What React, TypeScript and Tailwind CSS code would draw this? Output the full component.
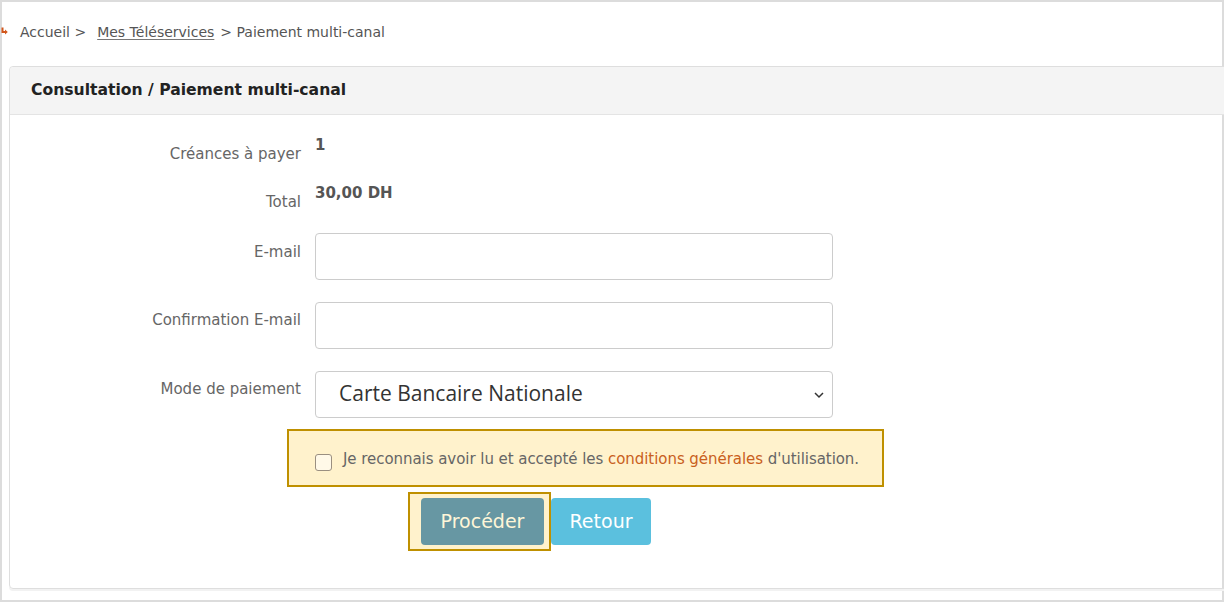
import React from "react";

const font = { fontFamily: '"DejaVu Sans", sans-serif' };

export default function App() {
  return (
    <div className="w-[1224px] h-[602px] overflow-hidden bg-white" style={font}>
      <div className="w-full h-full border-2 border-[#dcdcdc] flex flex-col">
        <div className="h-[64px] flex items-center pb-[3px] text-[14px] text-[#555]">
          <svg width="7" height="8" viewBox="0 0 7 8" className="-ml-[1px] mr-[12px] -mt-[4px]">
            <path d="M0.5 0.5 L2.5 0.5 L2.5 4 L4 4 L4 2.5 L6.8 5 L4 7.5 L4 6 L0.5 6 Z" fill="#d2571c" />
          </svg>
          <span>Accueil &gt;</span>
          <span className="ml-[11px] underline decoration-[#777] underline-offset-[2px]">Mes Téléservices</span>
          <span className="ml-[6px]">&gt; Paiement multi-canal</span>
        </div>
        <div className="ml-[7px] -mr-[6px] h-[523px] border border-[#dedede] rounded-[4px] shadow-[0_2px_0_#f2f2f2] flex flex-col">
          <div className="h-[48px] bg-[#f4f4f4] border-b border-[#e4e4e4] flex items-center pl-[21px] pt-[1px] text-[15.6px] font-bold text-[#222] rounded-t-[4px]">
            Consultation / Paiement multi-canal
          </div>
          <div className="flex flex-col pt-[22px]">
            <div className="flex h-[48px]">
              <div className="w-[291px] text-right pt-[7px] text-[15px] leading-[20px] text-[#666]">Créances à payer</div>
              <div className="ml-[14px] text-[15px] leading-[16px] font-bold text-[#555]">1</div>
            </div>
            <div className="flex h-[48px]">
              <div className="w-[291px] text-right pt-[7px] text-[15px] leading-[20px] text-[#666]">Total</div>
              <div className="ml-[14px] text-[15px] leading-[16px] font-bold text-[#555]">30,00 DH</div>
            </div>
            <div className="flex h-[69px]">
              <div className="w-[291px] text-right pt-[9px] text-[15px] leading-[20px] text-[#666]">E-mail</div>
              <div className="ml-[14px] w-[518px] h-[47px] border border-[#ccc] rounded-[4px] bg-white"></div>
            </div>
            <div className="flex h-[69px]">
              <div className="w-[291px] text-right pt-[8px] text-[15px] leading-[20px] text-[#666]">Confirmation E-mail</div>
              <div className="ml-[14px] w-[518px] h-[47px] border border-[#ccc] rounded-[4px] bg-white"></div>
            </div>
            <div className="flex h-[58px]">
              <div className="w-[291px] text-right pt-[8px] text-[15px] leading-[20px] text-[#666]">Mode de paiement</div>
              <div className="ml-[14px] w-[518px] h-[47px] border border-[#ccc] rounded-[4px] bg-white flex items-center justify-between pl-[23px] pr-[6px]">
                <span className="text-[21px] text-[#333] -mt-[1px]" style={{ fontFamily: '"Open Sans", sans-serif' }}>Carte Bancaire Nationale</span>
                <svg width="14" height="14" viewBox="0 0 14 14">
                  <path d="M3 5 L7 9 L11 5" fill="none" stroke="#333" strokeWidth="1.5" />
                </svg>
              </div>
            </div>
            <div className="ml-[277px] w-[597px] h-[58px] border-2 border-[#bf9000] bg-[#fff2cc] flex items-center pl-[26px] pt-[2px]">
              <span className="w-[17px] h-[17px] shrink-0 border border-[#9a8f80] rounded-[3px] bg-[#fff9e8] mt-[6px]"></span>
              <span className="ml-[11px] text-[15px] tracking-[-0.05px] text-[#666] whitespace-nowrap">
                Je reconnais avoir lu et accepté les <span className="text-[#c9601c]">conditions générales</span> d'utilisation.
              </span>
            </div>
            <div className="flex mt-[5px] ml-[398px]">
              <div className="w-[143px] h-[59px] border-2 border-[#bf9000] bg-[#fff2cc] pl-[11px] pt-[4px]">
                <div className="w-[123px] h-[47px] rounded-[4px] bg-[#6797a3] text-[#fff6d8] text-[19px] flex items-center justify-center">Procéder</div>
              </div>
              <div className="mt-[6px] w-[100px] h-[47px] rounded-[4px] bg-[#5bc0de] text-white text-[19px] flex items-center justify-center">Retour</div>
            </div>
          </div>
        </div>
      </div>
    </div>
  );
}
